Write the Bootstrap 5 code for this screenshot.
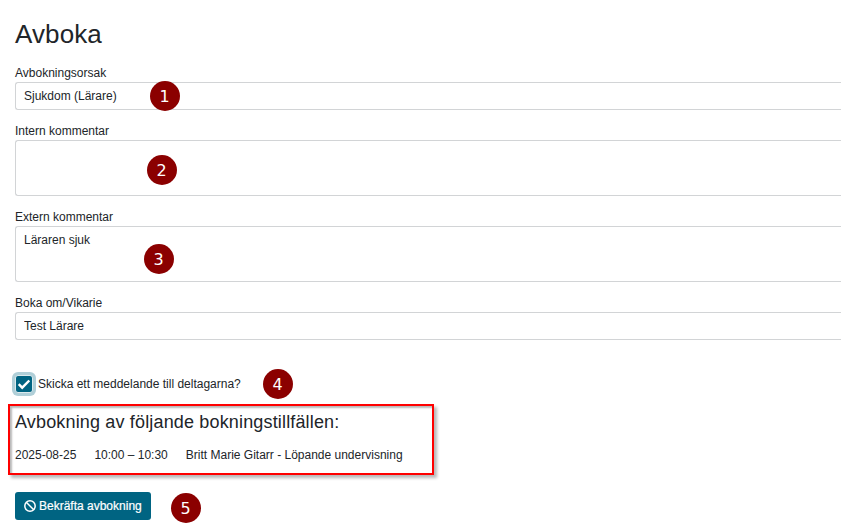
<!DOCTYPE html>
<html lang="sv">
<head>
<meta charset="utf-8">
<meta name="viewport" content="width=device-width, initial-scale=1">
<title>Avboka</title>
<link href="https://cdn.jsdelivr.net/npm/bootstrap@5.3.0/dist/css/bootstrap.min.css" rel="stylesheet">
<style>
body{font:12px/18px "Liberation Sans",Arial,sans-serif;color:#212529;background:#fff}
.page{min-height:529px;padding:19px 0 0 15px}
h1{font-size:26px;line-height:31px;letter-spacing:.1px;margin:0 0 14px}
.form-label{display:block;margin:0;line-height:18px}
.form-control{font-size:12px;line-height:18px;height:28px;padding:4px 8px;border:1px solid #d2d4d6;border-right:0;border-radius:3px 0 0 3px;color:#212529;resize:none}
textarea.form-control{height:56px;min-height:0}
.field{position:relative;margin-bottom:12px}
.step{position:absolute;width:30px;height:30px;border-radius:50%;background:#8b0000;color:#fff;font:16px/31px "DejaVu Sans",sans-serif;text-align:center}
.s1{left:134.5px;top:16.5px}.s2{left:131.5px;top:32.5px}.s3{left:128.5px;top:35.5px}.s4{left:247.5px;top:-6.5px}.s5{left:155.5px;top:.5px}
.notify{position:relative;margin-top:35px;height:18px}
.notify .form-check-input{width:18px;height:18px;margin:0 5px 0 0;border:1px solid #dceaed;border-radius:3px;box-shadow:0 0 0 3px #b0cfd8}
.notify .form-check-input:checked{background-color:#006482;background-image:url("data:image/svg+xml,%3Csvg xmlns='http://www.w3.org/2000/svg' viewBox='0 0 16 16'%3E%3Cpath d='M2.7 8.2l3.5 3.5 7.1-7.2' fill='none' stroke='%23fff' stroke-width='2.4'/%3E%3C/svg%3E");background-size:16px;border-color:#dceaed}
.summary{width:426px;height:71px;margin:11px 0 0 -7px;border:2px solid #f00;padding:5px 5px 0;box-shadow:3px 3px 3px rgba(0,0,0,.28),inset 2px 2px 2px rgba(0,0,0,.28)}
h2{font-size:18px;line-height:22px;margin:0 0 13px;letter-spacing:.16px}
.sessions{gap:18px}
.actions{position:relative;margin-top:17px}
.btn-confirm{--bs-btn-color:#fff;--bs-btn-bg:#006482;--bs-btn-hover-color:#fff;--bs-btn-hover-bg:#00556f;font-size:12px;line-height:18px;height:28px;width:136px;border:0;border-radius:3px;padding:0 0 0 9px;-webkit-text-stroke:.2px #fff}
.btn-confirm svg{margin-right:3px}
</style>
</head>
<body>
<main class="page">
<h1 class="fw-normal">Avboka</h1>
<form>
<div class="field"><label class="form-label" for="reason">Avbokningsorsak</label><input class="form-control" id="reason" value="Sjukdom (Lärare)"><span class="step s1">1</span></div>
<div class="field"><label class="form-label" for="internal">Intern kommentar</label><textarea class="form-control d-block" id="internal"></textarea><span class="step s2">2</span></div>
<div class="field"><label class="form-label" for="external">Extern kommentar</label><textarea class="form-control d-block" id="external">Läraren sjuk</textarea><span class="step s3">3</span></div>
<div class="field mb-0"><label class="form-label" for="substitute">Boka om/Vikarie</label><input class="form-control" id="substitute" value="Test Lärare"></div>
<div class="notify d-flex align-items-center"><input class="form-check-input flex-shrink-0" type="checkbox" id="send" checked><label for="send">Skicka ett meddelande till deltagarna?</label><span class="step s4">4</span></div>
<section class="summary">
<h2 class="fw-normal">Avbokning av följande bokningstillfällen:</h2>
<div class="sessions d-flex"><span>2025-08-25</span><span>10:00 – 10:30</span><span>Britt Marie Gitarr - Löpande undervisning</span></div>
</section>
<div class="actions"><button type="button" class="btn btn-confirm d-flex align-items-center text-nowrap"><svg class="flex-shrink-0" width="12" height="12" viewBox="0 0 12 12" fill="none" stroke="#fff" stroke-width="1.5"><circle cx="6" cy="6" r="5.2"/><path d="M2.3 2.3l7.4 7.4"/></svg>Bekräfta avbokning</button><span class="step s5">5</span></div>
</form>
</main>
<script src="https://cdn.jsdelivr.net/npm/bootstrap@5.3.0/dist/js/bootstrap.bundle.min.js"></script>
</body>
</html>
